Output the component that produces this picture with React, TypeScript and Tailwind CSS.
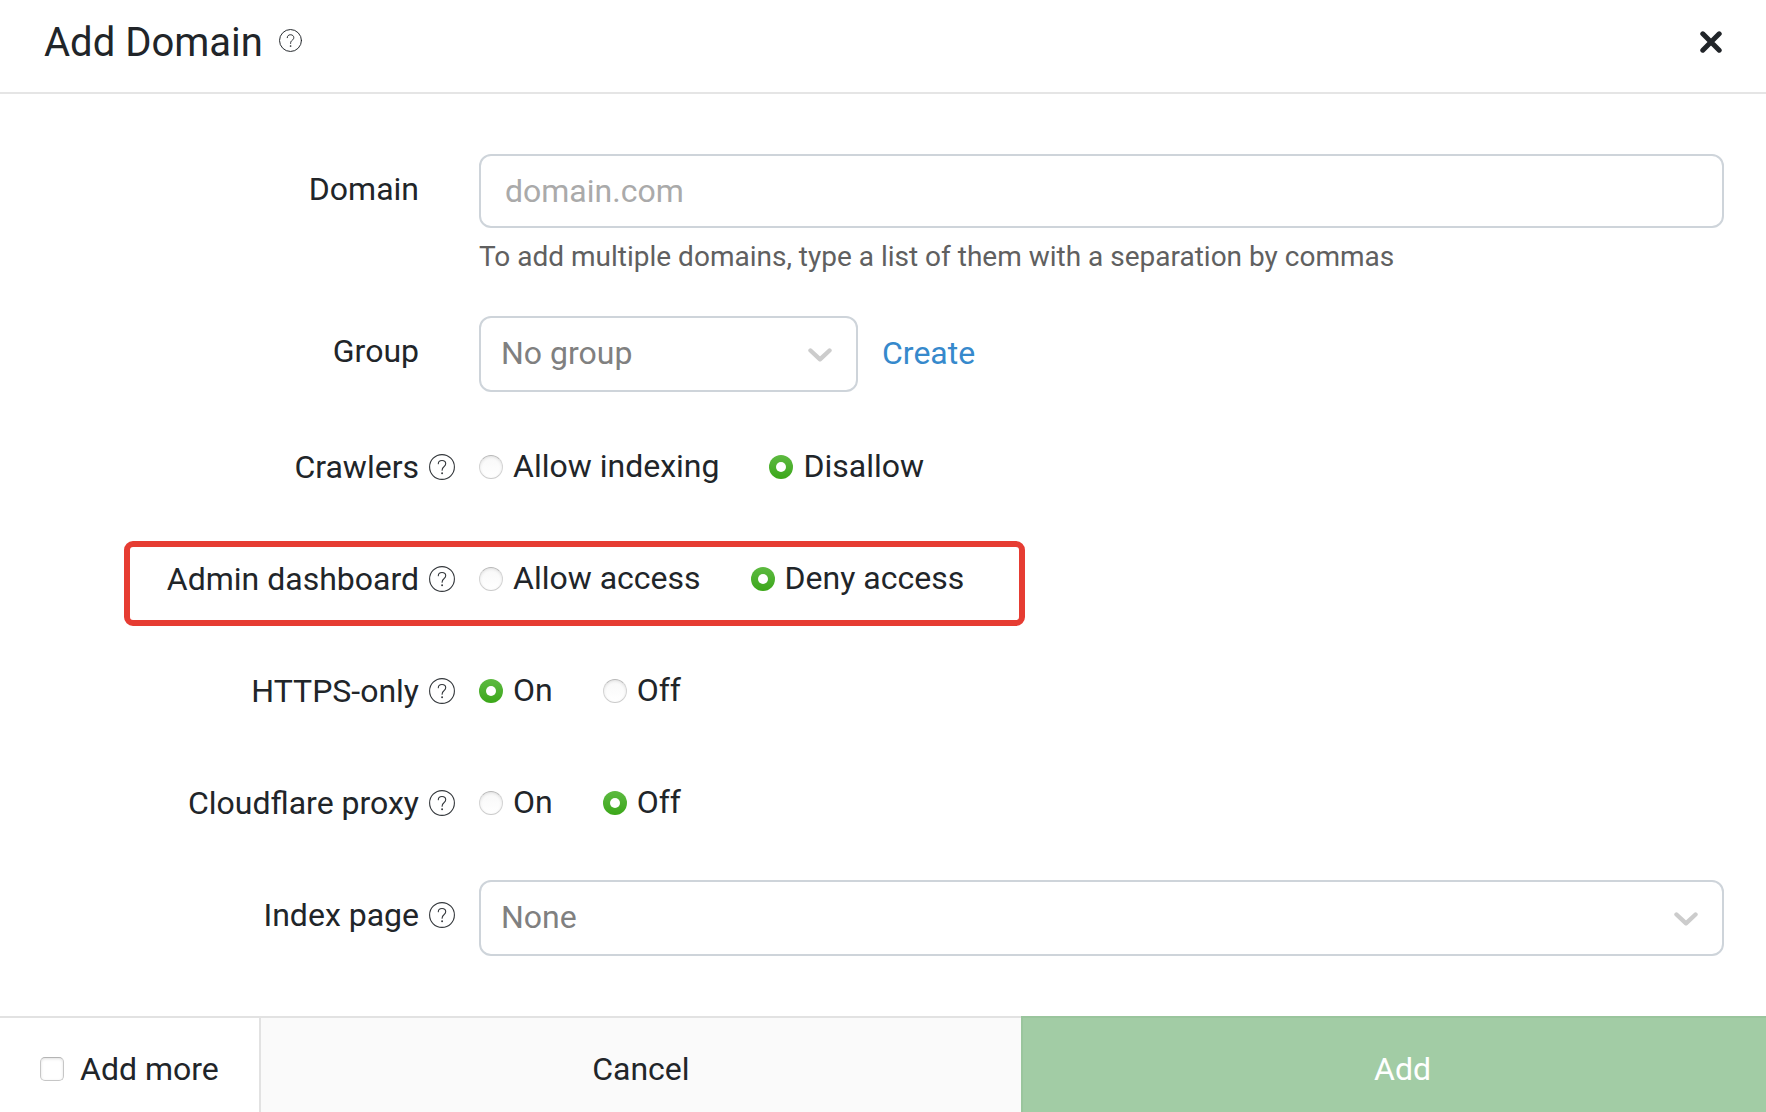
import { useState, type ReactNode } from "react";

function HelpIcon({ className }: { className: string }) {
  return (
    <svg
      viewBox="0 0 26 26"
      fill="none"
      stroke="currentColor"
      strokeLinecap="round"
      className={className}
      aria-hidden="true"
    >
      <circle cx="13" cy="13" r="12.4" strokeWidth="1.1" />
      <path
        d="M9.300 9.800C9.300 7.800 10.800 6.500 13 6.500s3.700 1.300 3.700 3.200c0 1.400-.7 2.200-1.800 3.100-1.300 1-1.800 1.700-1.800 3.500"
        strokeWidth="1.1"
      />
      <circle cx="13.100" cy="19.2" r="0.95" fill="currentColor" stroke="none" />
    </svg>
  );
}

function HelpButton({ topic }: { topic: string }) {
  return (
    <button type="button" aria-label={`Help: ${topic}`} className="shrink-0 text-[#33373b]">
      <HelpIcon className="size-[26px]" />
    </button>
  );
}

function Row({
  label,
  htmlFor,
  help = false,
  highlighted = false,
  children,
}: {
  label: string;
  htmlFor?: string;
  help?: boolean;
  highlighted?: boolean;
  children: ReactNode;
}) {
  return (
    <div className="relative flex min-h-[76px] gap-6">
      <div className="mt-[11px] flex h-12 w-[455px] shrink-0 items-center justify-end gap-2.5">
        {htmlFor ? (
          <label htmlFor={htmlFor}>{label}</label>
        ) : (
          <span id={`${label.replace(/\s/g, "-")}-label`}>{label}</span>
        )}
        {help ? <HelpButton topic={label} /> : <span className="w-[26px]" />}
      </div>
      <div className="min-w-0 flex-1">{children}</div>
      {highlighted && (
        <div className="pointer-events-none absolute -top-[3px] left-[124px] h-[85px] w-[901px] rounded-[9px] border-6 border-[#e63c32]" />
      )}
    </div>
  );
}

function RadioRow({
  label,
  options,
  initial,
  highlighted,
}: {
  label: string;
  options: string[];
  initial: string;
  highlighted?: boolean;
}) {
  const [value, setValue] = useState(initial);
  return (
    <Row label={label} help highlighted={highlighted}>
      <div
        role="radiogroup"
        aria-labelledby={`${label.replace(/\s/g, "-")}-label`}
        className="mt-[11px] flex h-12 items-center gap-[50px]"
      >
        {options.map((option) => (
          <label key={option} className="flex items-center gap-2.5">
            <input
              type="radio"
              name={label}
              checked={value === option}
              onChange={() => setValue(option)}
              className="flex size-6 appearance-none items-center justify-center rounded-full border border-x-[#d4d4d4] border-t-[#b8b8b8] border-b-[#cacaca] bg-linear-to-b from-[#f8f8f8] to-white shadow-[inset_0_1px_3px_rgba(0,0,0,0.1)] checked:border-0 checked:from-[#5dba40] checked:to-[#3ba717] checked:shadow-none checked:before:size-2.5 checked:before:rounded-full checked:before:bg-white"
            />
            <span className="pb-0.5">{option}</span>
          </label>
        ))}
      </div>
    </Row>
  );
}

function Select({ id, option, className }: { id: string; option: string; className: string }) {
  return (
    <div className={`relative ${className}`}>
      <select
        id={id}
        className="h-[76px] w-full appearance-none rounded-xl border-2 border-[#ced4da] bg-white px-5 pb-0.5 text-[#808080]"
      >
        <option>{option}</option>
      </select>
      <svg
        viewBox="0 0 24 14"
        fill="none"
        stroke="#cccccc"
        strokeWidth="4.4"
        strokeLinecap="round"
        strokeLinejoin="round"
        className="pointer-events-none absolute top-8 right-[26px] h-3.5 w-6"
        aria-hidden="true"
      >
        <path d="M2.5 2.5 12 11.3l9.500-8.800" />
      </svg>
    </div>
  );
}

export default function App() {
  return (
    <form
      onSubmit={(event) => event.preventDefault()}
      className="flex min-h-screen flex-col bg-white font-['Roboto',sans-serif] text-[32px] leading-[48px] text-[#212529]"
    >
      <header className="flex items-center justify-between border-b-2 border-[#e5e5e5] pt-[11px] pr-11 pb-[19px] pl-11">
        <div className="flex items-center gap-4">
          <h1 className="pt-0.5 text-[40px] leading-[60px]">Add Domain</h1>
          <button type="button" aria-label="Help: Add Domain" className="pb-1 text-[#212529]">
            <HelpIcon className="size-[23px]" />
          </button>
        </div>
        <button type="button" aria-label="Close">
          <svg
            viewBox="0 0 22 22"
            stroke="currentColor"
            strokeWidth="5"
            strokeLinecap="round"
            className="size-[22px]"
            aria-hidden="true"
          >
            <path d="M2.800 2.800l16.400 16.400M19.200 2.800 2.800 19.200" />
          </svg>
        </button>
      </header>

      <main className="flex flex-1 flex-col gap-9 pt-[60px] pr-[42px] pb-[60px]">
        <Row label="Domain" htmlFor="domain">
          <input
            id="domain"
            type="text"
            placeholder="domain.com"
            className="block h-[74px] w-full rounded-xl border-2 border-[#ced4da] px-6 placeholder:text-[#aaaaaa]"
          />
          <p className="mt-2 mb-0.5 text-[28px] leading-[42px] text-[#606060]">
            To add multiple domains, type a list of them with a separation by commas
          </p>
        </Row>
        <Row label="Group" htmlFor="group">
          <div className="mb-1 flex items-center gap-6">
            <Select id="group" option="No group" className="w-[379px]" />
            <a href="#create" className="pb-0.5 text-[#3689cc]">
              Create
            </a>
          </div>
        </Row>
        <RadioRow label="Crawlers" options={["Allow indexing", "Disallow"]} initial="Disallow" />
        <RadioRow
          label="Admin dashboard"
          options={["Allow access", "Deny access"]}
          initial="Deny access"
          highlighted
        />
        <RadioRow label="HTTPS-only" options={["On", "Off"]} initial="On" />
        <RadioRow label="Cloudflare proxy" options={["On", "Off"]} initial="Off" />
        <Row label="Index page" htmlFor="index-page" help>
          <Select id="index-page" option="None" className="w-full" />
        </Row>
      </main>

      <footer className="flex h-24">
        <label className="flex items-center gap-4 border-t-2 border-r-2 border-[#e2e2e2] px-10 pt-2">
          <input
            type="checkbox"
            className="size-6 appearance-none rounded-[5px] border border-x-[#c6c6c6] border-t-[#b4b4b4] border-b-[#c6c6c6] bg-white shadow-[inset_0_1px_3px_rgba(0,0,0,0.12)] checked:bg-[#3ba717]"
          />
          Add more
        </label>
        <button type="button" className="flex-1 border-t-2 border-[#e2e2e2] bg-[#fafafa] pt-2">
          Cancel
        </button>
        <button
          type="submit"
          className="w-[745px] max-w-[43%] border-t-2 border-l-2 border-[#9ac59d] bg-[#a2cca5] pt-2 pl-4 text-white"
        >
          Add
        </button>
      </footer>
    </form>
  );
}
